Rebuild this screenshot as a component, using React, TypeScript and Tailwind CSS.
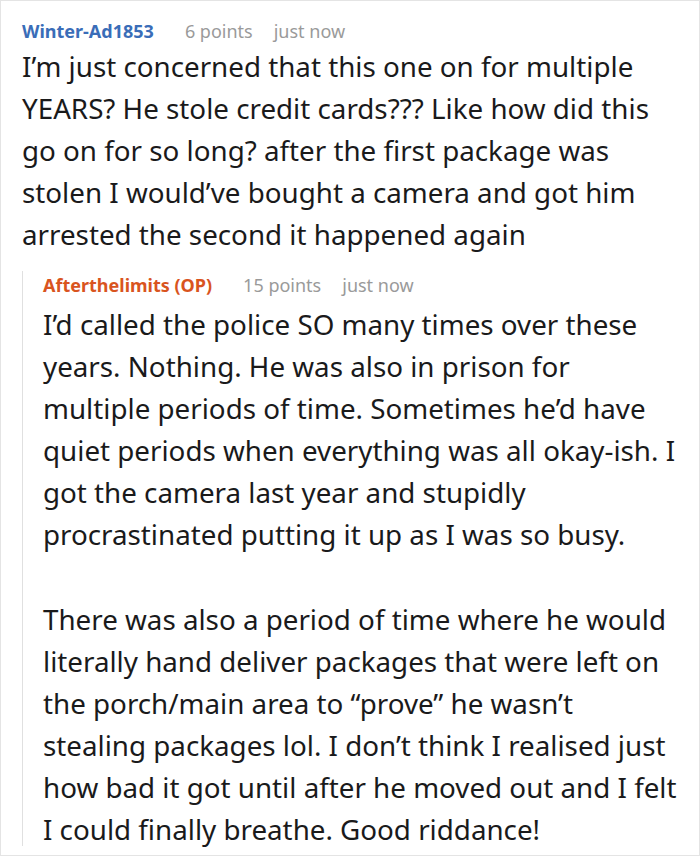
export default function App() {
  return (
    <div
      className="w-[700px] h-[856px] bg-white border border-[#e4e4e4] pl-[21px] pr-[19px] pt-[16px] text-[#1a1a1b]"
      style={{ fontFamily: '"Noto Sans", "Open Sans", sans-serif' }}
    >
      <div className="flex items-baseline text-[18px] leading-[28px]">
        <span className="font-bold text-[#3a6db8]">Winter-Ad1853</span>
        <span className="ml-[31px] text-[#9a9a9a]">6 points</span>
        <span className="ml-[21px] text-[#9a9a9a]">just now</span>
      </div>
      <p className="text-[27.75px] leading-[42px]">
        I’m just concerned that this one on for multiple YEARS? He stole credit cards??? Like how did this go on for
        so long? after the first package was stolen I would’ve bought a camera and got him arrested the second it
        happened again
      </p>

      <div className="mt-[16px] flex">
        <div className="w-px bg-[#e0e0e0] mb-[4px]" />
        <div className="pl-[20px] flex-1">
          <div className="flex items-baseline text-[18px] leading-[28px]">
            <span className="font-bold text-[#d9541e]">Afterthelimits (OP)</span>
            <span className="ml-[31px] text-[#9a9a9a]">15 points</span>
            <span className="ml-[21px] text-[#9a9a9a]">just now</span>
          </div>
          <p className="text-[27.75px] leading-[42px] mt-[4px]">
            I’d called the police SO many times over these years. Nothing. He was also in prison for multiple
            periods of time. Sometimes he’d have quiet periods when everything was all okay-ish. I got the camera
            last year and stupidly procrastinated putting it up as I was so busy.
          </p>
          <p className="text-[27.75px] leading-[42px] mt-[43px]">
            There was also a period of time where he would literally hand deliver packages that were left on the
            porch/main area to “prove” he wasn’t stealing packages lol. I don’t think I realised just how bad it
            got until after he moved out and I felt I could finally breathe. Good riddance!
          </p>
        </div>
      </div>
    </div>
  );
}
